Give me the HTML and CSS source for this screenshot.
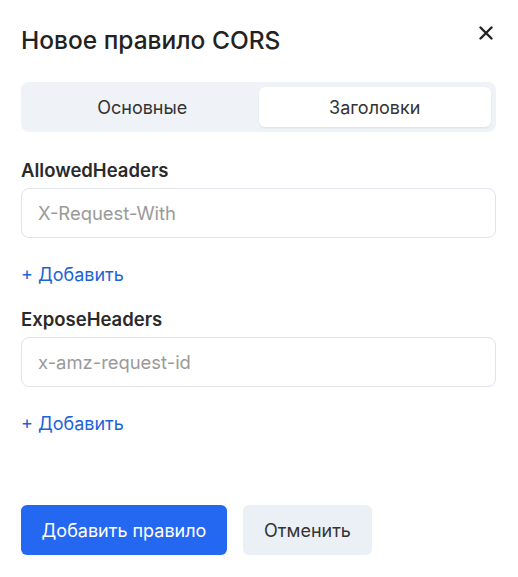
FILE: index.html
```html
<!DOCTYPE html>
<html lang="ru">
<head>
<meta charset="utf-8">
<link rel="stylesheet" href="styles.css">
</head>
<body>
<div class="dialog">
  <div class="header">
    <h1 class="title">Новое правило CORS</h1>
    <button class="close" aria-label="Закрыть">
      <svg width="14" height="14" viewBox="0 0 14 14"><path d="M1.5 1.5L12.5 12.5M12.5 1.5L1.5 12.5" stroke="#222" stroke-width="2.4" stroke-linecap="round"/></svg>
    </button>
  </div>
  <div class="tabs">
    <div class="tab">Основные</div>
    <div class="tab active">Заголовки</div>
  </div>
  <div class="field first">
    <div class="label">AllowedHeaders</div>
    <div class="input">X-Request-With</div>
    <a class="add">+ Добавить</a>
  </div>
  <div class="field">
    <div class="label">ExposeHeaders</div>
    <div class="input">x-amz-request-id</div>
    <a class="add">+ Добавить</a>
  </div>
  <div class="actions">
    <button class="btn primary">Добавить правило</button>
    <button class="btn secondary">Отменить</button>
  </div>
</div>
</body>
</html>
```

FILE: styles.css
```css
* { box-sizing: border-box; }
html, body { margin: 0; padding: 0; background: #fff; }
body { font-family: Inter, "Noto Sans", sans-serif; color: #222; }
.dialog { width: 518px; padding: 24px 22px 22px 21px; }
.header { display: flex; justify-content: space-between; align-items: flex-start; height: 34px; }
.title { margin: 2px 0 0; font-size: 24.5px; font-weight: 500; line-height: 28px; color: #222; }
.close { border: 0; background: none; padding: 0; margin: 2px 3px 0 0; width: 14px; height: 14px; display: flex; }
.tabs { margin-top: 24px; background: #eff2f7; border-radius: 8px; padding: 5px; display: flex; height: 50px; }
.tab { flex: 1; display: flex; align-items: center; justify-content: center; font-size: 18px; color: #333; border-radius: 6px; }
.tab.active { background: #fff; box-shadow: 0 1px 2px rgba(0,0,0,0.08); }
.field { display: flex; flex-direction: column; align-items: flex-start; }
.field.first { margin-top: 26px; }
.field + .field { margin-top: 20px; }
.label { font-size: 18.5px; font-weight: 600; line-height: 24px; color: #2a2a2a; }
.input { margin-top: 6px; width: 100%; height: 50px; border: 1px solid #e1e3ea; border-radius: 8px; padding: 0 16px; display: flex; align-items: center; font-size: 18.4px; color: #9a9a9a; }
.add { margin-top: 25px; font-size: 18px; line-height: 24px; color: #1d63d8; }
.actions { margin-top: 69px; display: flex; gap: 16px; }
.btn { border: 0; height: 50px; border-radius: 6px; font-family: inherit; font-size: 18px; padding: 0; }
.primary { background: #2468f2; color: #fff; width: 206px; }
.secondary { background: #ebf0f7; color: #333; width: 129px; }
```
